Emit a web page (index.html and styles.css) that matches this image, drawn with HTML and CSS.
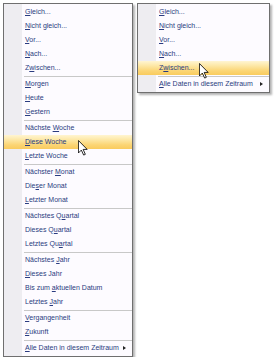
FILE: index.html
```html
<!DOCTYPE html>
<html>
<head>
<meta charset="utf-8">
<link rel="stylesheet" href="styles.css">
</head>
<body>
<div class="page">
  <div class="menu menu-left">
    <div class="item"><span class="label"><u>G</u>leich...</span></div>
    <div class="item"><span class="label"><u>N</u>icht gleich...</span></div>
    <div class="item"><span class="label"><u>V</u>or...</span></div>
    <div class="item"><span class="label"><u>N</u>ach...</span></div>
    <div class="item"><span class="label">Z<u>w</u>ischen...</span></div>
    <div class="sep"></div>
    <div class="item"><span class="label"><u>M</u>orgen</span></div>
    <div class="item"><span class="label"><u>H</u>eute</span></div>
    <div class="item"><span class="label"><u>G</u>estern</span></div>
    <div class="sep"></div>
    <div class="item"><span class="label">Nächste <u>W</u>oche</span></div>
    <div class="item hot"><span class="label"><u>D</u>iese Woche</span><svg class="cursor" viewBox="0 0 12 19" width="10" height="16"><path d="M0.5 0.5 L0.5 15.5 L4 12 L6.8 18 L8.8 17.1 L6.2 11.2 L11 11.2 Z" fill="#fff" stroke="#000" stroke-width="1"/></svg></div>
    <div class="item"><span class="label"><u>L</u>etzte Woche</span></div>
    <div class="sep"></div>
    <div class="item"><span class="label">Nächster <u>M</u>onat</span></div>
    <div class="item"><span class="label">Die<u>s</u>er Monat</span></div>
    <div class="item"><span class="label"><u>L</u>etzter Monat</span></div>
    <div class="sep"></div>
    <div class="item"><span class="label">Nächstes Q<u>u</u>artal</span></div>
    <div class="item"><span class="label">Dieses Q<u>u</u>artal</span></div>
    <div class="item"><span class="label">Letztes Qu<u>a</u>rtal</span></div>
    <div class="sep"></div>
    <div class="item"><span class="label">Nächstes <u>J</u>ahr</span></div>
    <div class="item"><span class="label"><u>D</u>ieses Jahr</span></div>
    <div class="item"><span class="label">Bis zum <u>a</u>ktuellen Datum</span></div>
    <div class="item"><span class="label">Letztes <u>J</u>ahr</span></div>
    <div class="sep"></div>
    <div class="item"><span class="label"><u>V</u>ergangenheit</span></div>
    <div class="item"><span class="label"><u>Z</u>ukunft</span></div>
    <div class="sep"></div>
    <div class="item sub"><span class="label"><u>A</u>lle Daten in diesem Zeitraum</span><span class="arrow"></span></div>
  </div>
  <div class="menu menu-right">
    <div class="item"><span class="label"><u>G</u>leich...</span></div>
    <div class="item"><span class="label"><u>N</u>icht gleich...</span></div>
    <div class="item"><span class="label"><u>V</u>or...</span></div>
    <div class="item"><span class="label"><u>N</u>ach...</span></div>
    <div class="item hot"><span class="label">Z<u>w</u>ischen...</span><svg class="cursor cursor-r" viewBox="0 0 12 19" width="10" height="16"><path d="M0.5 0.5 L0.5 15.5 L4 12 L6.8 18 L8.8 17.1 L6.2 11.2 L11 11.2 Z" fill="#fff" stroke="#000" stroke-width="1"/></svg></div>
    <div class="sep"></div>
    <div class="item sub"><span class="label"><u>A</u>lle Daten in diesem Zeitraum</span><span class="arrow"></span></div>
  </div>
</div>
</body>
</html>
```
FILE: styles.css
```css
html, body {
  margin: 0;
  padding: 0;
  background: #ffffff;
}

.page {
  display: flex;
  align-items: flex-start;
  gap: 4px;
  padding: 3px 0 0 3px;
  font-family: "Liberation Sans", Arial, sans-serif;
  font-size: 7px;
  color: #2a3b80;
}

.menu {
  box-sizing: border-box;
  border: 1px solid #6f6f6f;
  padding: 1px 0;
  background: linear-gradient(to right, #eeedf1 0, #eeedf1 18px, #fdfbff 18px);
  box-shadow: 2px 2px 2px rgba(0, 0, 0, 0.3);
}

.menu-left {
  width: 130px;
}

.menu-right {
  width: 133px;
}

.item {
  position: relative;
  height: 14px;
  padding-left: 21px;
  padding-right: 6px;
  white-space: nowrap;
  display: flex;
  align-items: center;
}

.label {
  line-height: 14px;
}

.item u {
  text-decoration: underline;
  text-underline-offset: 1px;
}

.item.hot {
  background: linear-gradient(to bottom, #fff5d2 0%, #fde7a4 35%, #fbd575 70%, #f9cb5e 100%);
}

.sep {
  height: 2px;
  margin-left: 20px;
  display: flex;
  align-items: center;
}

.sep::after {
  content: "";
  display: block;
  width: 100%;
  height: 1px;
  background: #c8c8c8;
}

.sub .arrow {
  margin-left: auto;
  width: 0;
  height: 0;
  border-top: 2.5px solid transparent;
  border-bottom: 2.5px solid transparent;
  border-left: 3px solid #222;
}

.cursor {
  position: absolute;
  left: 74px;
  top: 5px;
}

.cursor-r {
  left: 61px;
  top: 2px;
}
```
